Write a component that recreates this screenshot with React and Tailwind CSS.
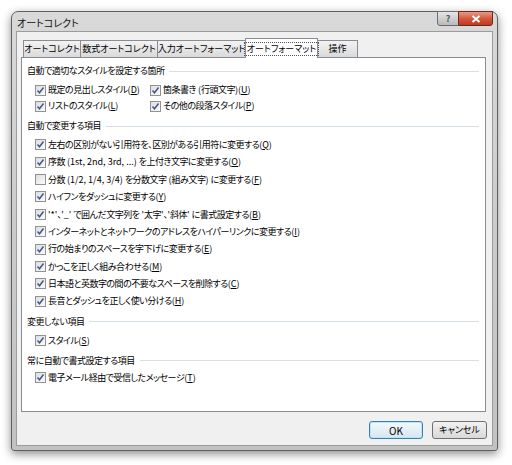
import React from 'react';

const font = { fontFamily: '"Noto Sans CJK JP", "Noto Sans", sans-serif' };

const Check = ({ checked = true }) => (
  <span className="w-[11px] h-[11px] shrink-0 border border-[#929292] bg-gradient-to-br from-[#dedede] to-[#fbfbfb] flex items-center justify-center">
    {checked && (
      <svg width="9" height="9" viewBox="0 0 9 9">
        <path d="M1.5 4.5 L3.5 6.8 L7.5 1.5" fill="none" stroke="#40598c" strokeWidth="1.5" />
      </svg>
    )}
  </span>
);

// Japanese runs get tighter spacing, latin runs keep their width
const Jp = ({ text }) =>
  text.split(/([\x20-\x7e]+)/).map((part, i) =>
    /^[\x20-\x7e]+$/.test(part) ? (
      <span key={i}>{part}</span>
    ) : (
      <span key={i} className="tracking-[-0.5px]">{part}</span>
    )
  );

// label with an access key shown underlined
const Label = ({ text, k }) => (
  <span className="whitespace-nowrap">
    <Jp text={text} />(<span className="underline">{k}</span>)
  </span>
);

const Row = ({ text, k, checked = true, h = 'h-[17.4px]', pl = 'pl-[8px]' }) => (
  <div className={`flex items-center gap-[2px] ${pl} ${h}`}>
    <Check checked={checked} />
    <Label text={text} k={k} />
  </div>
);

const Header = ({ children, className = '' }) => (
  <div className={`flex items-center gap-[5px] h-[16px] pr-[6px] ${className}`}>
    <span className="whitespace-nowrap"><Jp text={children} /></span>
    <span className="flex-1 h-px bg-[#d5dfe5]" />
  </div>
);

const tabs = [
  { name: 'オートコレクト', w: 'w-[58px]' },
  { name: '数式オートコレクト', w: 'w-[78px]' },
  { name: '入力オートフォーマット', w: 'w-[89px]' },
  { name: 'オートフォーマット', w: 'w-[73px]', active: true },
  { name: '操作', w: 'w-[41px]' },
];

const changeItems = [
  ['左右の区別がない引用符を、区別がある引用符に変更する', 'Q', true],
  ['序数 (1st, 2nd, 3rd, ...) を上付き文字に変更する', 'O', true],
  ['分数 (1/2, 1/4, 3/4) を分数文字 (組み文字) に変更する', 'F', false],
  ['ハイフンをダッシュに変更する', 'Y', true],
  ["'*'、'_' で囲んだ文字列を '太字'、'斜体' に書式設定する", 'B', true],
  ['インターネットとネットワークのアドレスをハイパーリンクに変更する', 'I', true],
  ['行の始まりのスペースを字下げに変更する', 'E', true],
  ['かっこを正しく組み合わせる', 'M', true],
  ['日本語と英数字の間の不要なスペースを削除する', 'C', true],
  ['長音とダッシュを正しく使い分ける', 'H', true],
];

export default function App() {
  return (
    <div className="w-[512px] h-[465px] bg-white pt-[11px] pl-[11px] text-[9px] text-black [font-feature-settings:'palt']" style={font}>
      <div className="relative w-[487px] h-[440px] flex flex-col border border-[#5f6060] rounded-t-[7px] rounded-b-[3px] bg-gradient-to-b from-[#d9d9d9] via-[#cbcbcb] to-[#c2c2c2] shadow-[0_3px_10px_rgba(0,0,0,0.45)]">
        {/* title bar */}
        <div className="h-[19px] flex items-center pl-[5px] pt-[1px] text-[10px] text-[#111]">オートコレクト</div>
        <div className="absolute -top-px right-[4px] flex">
          <div className="w-[22px] h-[15px] border border-[#6d6d6d] rounded-bl-[3px] bg-gradient-to-b from-[#e6e6e6] to-[#b9b9b9] flex items-center justify-center text-[9px] text-[#555] font-bold">?</div>
          <div className="w-[35px] h-[15px] -ml-px border border-[#6a2a1d] rounded-br-[3px] bg-gradient-to-b from-[#e59a87] via-[#d4583e] to-[#c1391f] flex items-center justify-center">
            <svg width="10" height="8" viewBox="0 0 10 8">
              <path d="M1.5 1 L8.5 7 M8.5 1 L1.5 7" stroke="#fff" strokeWidth="2" />
            </svg>
          </div>
        </div>

        {/* client area */}
        <div className="mx-[4px] h-[415px] border border-[#9c9c9c] bg-[#f0f0f0] flex flex-col pt-[6px] pl-[4px] pr-[6px]">
          <div className="flex items-end h-[19px] pl-[2px]">
            {tabs.map((t, i) =>
              t.active ? (
                <div
                  key={t.name}
                  className={`relative z-10 -ml-px ${t.w} h-[20px] -mb-px border border-b-0 border-[#898c95] bg-white flex items-center justify-center`}
                >
                  <span className="border border-dotted border-[#555] px-[2px] leading-[12px] whitespace-nowrap">{t.name}</span>
                </div>
              ) : (
                <div
                  key={t.name}
                  className={`${i > 0 ? '-ml-px' : ''} ${t.w} h-[17px] border border-b-0 border-[#898c95] bg-gradient-to-b from-[#f3f3f3] to-[#dadada] flex items-center justify-center whitespace-nowrap`}
                >
                  {t.name}
                </div>
              )
            )}
          </div>

          <div className="h-[355px] border border-[#898c95] bg-white flex flex-col pl-[5px] pt-[5px]">
            <Header>自動で適切なスタイルを設定する箇所</Header>
            <div className="grid grid-cols-[115px_1fr] mt-[3px] pl-[8px]">
              <Row text="既定の見出しスタイル" k="D" h="h-[16px]" pl="pl-0" />
              <Row text="箇条書き (行頭文字)" k="U" h="h-[16px]" pl="pl-0" />
              <Row text="リストのスタイル" k="L" h="h-[16px]" pl="pl-0" />
              <Row text="その他の段落スタイル" k="P" h="h-[16px]" pl="pl-0" />
            </div>

            <Header className="mt-[4px]">自動で変更する項目</Header>
            <div className="mt-[2px]">
              {changeItems.map(([text, k, c]) => (
                <Row key={k} text={text} k={k} checked={c} />
              ))}
            </div>

            <Header className="mt-[4px]">変更しない項目</Header>
            <div className="mt-[2px]">
              <Row text="スタイル" k="S" />
            </div>

            <Header className="mt-[3px]">常に自動で書式設定する項目</Header>
            <div className="mt-[1px]">
              <Row text="電子メール経由で受信したメッセージ" k="T" />
            </div>
          </div>

          <div className="flex justify-end gap-[9px] mt-[9px] -mr-px">
            <button className="w-[54px] h-[18px] rounded-[3px] border border-[#3c7fb1] bg-gradient-to-b from-[#f4f9fc] to-[#d6e6f2] shadow-[inset_0_0_0_1px_#bfe3f6] text-[10px]">OK</button>
            <button className="w-[55px] h-[18px] rounded-[3px] border border-[#707070] bg-gradient-to-b from-[#f2f2f2] to-[#d9d9d9] text-[9px]">キャンセル</button>
          </div>
        </div>
      </div>
    </div>
  );
}
